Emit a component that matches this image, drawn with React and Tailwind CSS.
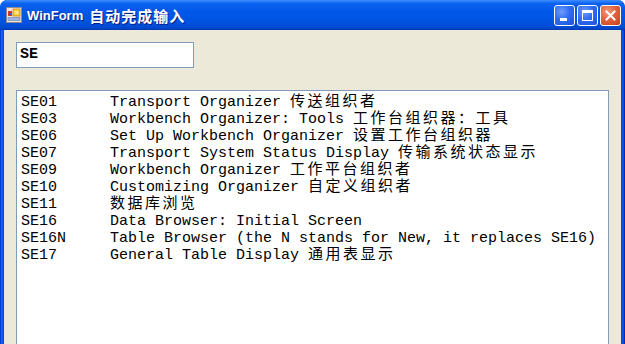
import React from "react";

const rows = [
  ["SE01", "Transport Organizer ", "传送组织者"],
  ["SE03", "Workbench Organizer: Tools ", "工作台组织器：工具"],
  ["SE06", "Set Up Workbench Organizer ", "设置工作台组织器"],
  ["SE07", "Transport System Status Display ", "传输系统状态显示"],
  ["SE09", "Workbench Organizer ", "工作平台组织者"],
  ["SE10", "Customizing Organizer ", "自定义组织者"],
  ["SE11", "", "数据库浏览"],
  ["SE16", "Data Browser: Initial Screen", ""],
  ["SE16N", "Table Browser (the N stands for New, it replaces SE16)", ""],
  ["SE17", "General Table Display ", "通用表显示"],
];

const mono = { fontFamily: '"Liberation Mono", "Courier New", monospace' };
const cjk = { fontFamily: '"Noto Sans CJK SC", sans-serif' };

function AppIcon() {
  return (
    <svg width="16" height="16" viewBox="0 0 16 16">
      <rect x="0.5" y="0.5" width="15" height="15" fill="#ece6d6" stroke="#8a8a96" />
      <rect x="2" y="4" width="4" height="5" fill="#d83828" />
      <rect x="3" y="6" width="2" height="2" fill="#3a5cc8" />
      <rect x="7" y="2" width="7" height="7" fill="#f8c830" stroke="#d08a10" strokeWidth="0.8" />
      <rect x="8.5" y="3.5" width="4" height="4" fill="#ffe488" />
      <rect x="2" y="10.5" width="12" height="3" fill="#9fb6e0" stroke="#6680c0" strokeWidth="0.6" />
    </svg>
  );
}

function CapButton({ kind }) {
  const isClose = kind === "close";
  return (
    <div
      className={
        "w-[21px] h-[21px] rounded-[3px] border border-white flex items-center justify-center " +
        (isClose
          ? "bg-[radial-gradient(circle_at_35%_30%,#f09a7a_0%,#e0633e_45%,#c8401c_100%)]"
          : "bg-[radial-gradient(circle_at_35%_30%,#6f9cff_0%,#2f6df0_45%,#1a50d8_100%)]")
      }
    >
      {kind === "min" && <div className="w-[7px] h-[3px] bg-white mt-[8px] -ml-[3px]" />}
      {kind === "max" && (
        <div className="w-[11px] h-[11px] border border-white border-t-[3px]" />
      )}
      {isClose && (
        <svg width="11" height="11" viewBox="0 0 11 11">
          <path d="M1.5 1.5 L9.5 9.5 M9.5 1.5 L1.5 9.5" stroke="white" strokeWidth="2" strokeLinecap="square" />
        </svg>
      )}
    </div>
  );
}

export default function App() {
  return (
    <div className="w-[625px] h-[344px] overflow-hidden bg-[#0a4ed8] rounded-t-[7px] flex flex-col">
      <div className="h-[30px] shrink-0 flex items-center pl-[6px] pr-[4px] rounded-t-[7px] bg-[linear-gradient(to_bottom,#3d8dff_0%,#0b62f0_12%,#0057e8_40%,#0054e3_70%,#0049d0_92%,#003aae_100%)]">
        <AppIcon />
        <div
          className="ml-[5px] text-white font-bold text-[13px] leading-none flex items-center [text-shadow:1px_1px_0_#0a1a80]"
          style={{ fontFamily: '"Liberation Sans", "Noto Sans CJK SC", sans-serif' }}
        >
          <span>WinForm</span>
          <span className="ml-[6px] text-[15px] tracking-[1px]" style={cjk}>自动完成输入</span>
        </div>
        <div className="ml-auto flex gap-[2px]">
          <CapButton kind="min" />
          <CapButton kind="max" />
          <CapButton kind="close" />
        </div>
      </div>
      <div className="flex-1 flex">
        <div className="w-[4px] bg-[linear-gradient(to_right,#0020c0,#1668f0,#0a58e8,#0841c8)]" />
        <div className="flex-1 bg-[#ece9d8] flex flex-col pl-[12px] pr-[12px] pt-[12px]">
          <div className="w-[178px] h-[26px] bg-white border border-[#7f9db9] flex items-center pl-[3px]">
            <span className="font-bold text-[15px] text-black" style={mono}>SE</span>
          </div>
          <div className="mt-[22px] flex-1 bg-white border border-[#7f9db9] border-b-0 pt-[3px] pl-[4px]">
            {rows.map(([code, en, zh]) => (
              <div key={code} className="flex h-[17px] leading-[17px] text-[15px] text-black whitespace-pre" style={mono}>
                <span className="w-[89px] shrink-0">{code}</span>
                <span>
                  {en}
                  {zh && (
                    <span className="text-[15px] leading-[0] tracking-[2.5px]" style={cjk}>{zh}</span>
                  )}
                </span>
              </div>
            ))}
          </div>
        </div>
        <div className="w-[4px] bg-[linear-gradient(to_right,#0841c8,#0a58e8,#1044d8,#001ca8)]" />
      </div>
    </div>
  );
}
